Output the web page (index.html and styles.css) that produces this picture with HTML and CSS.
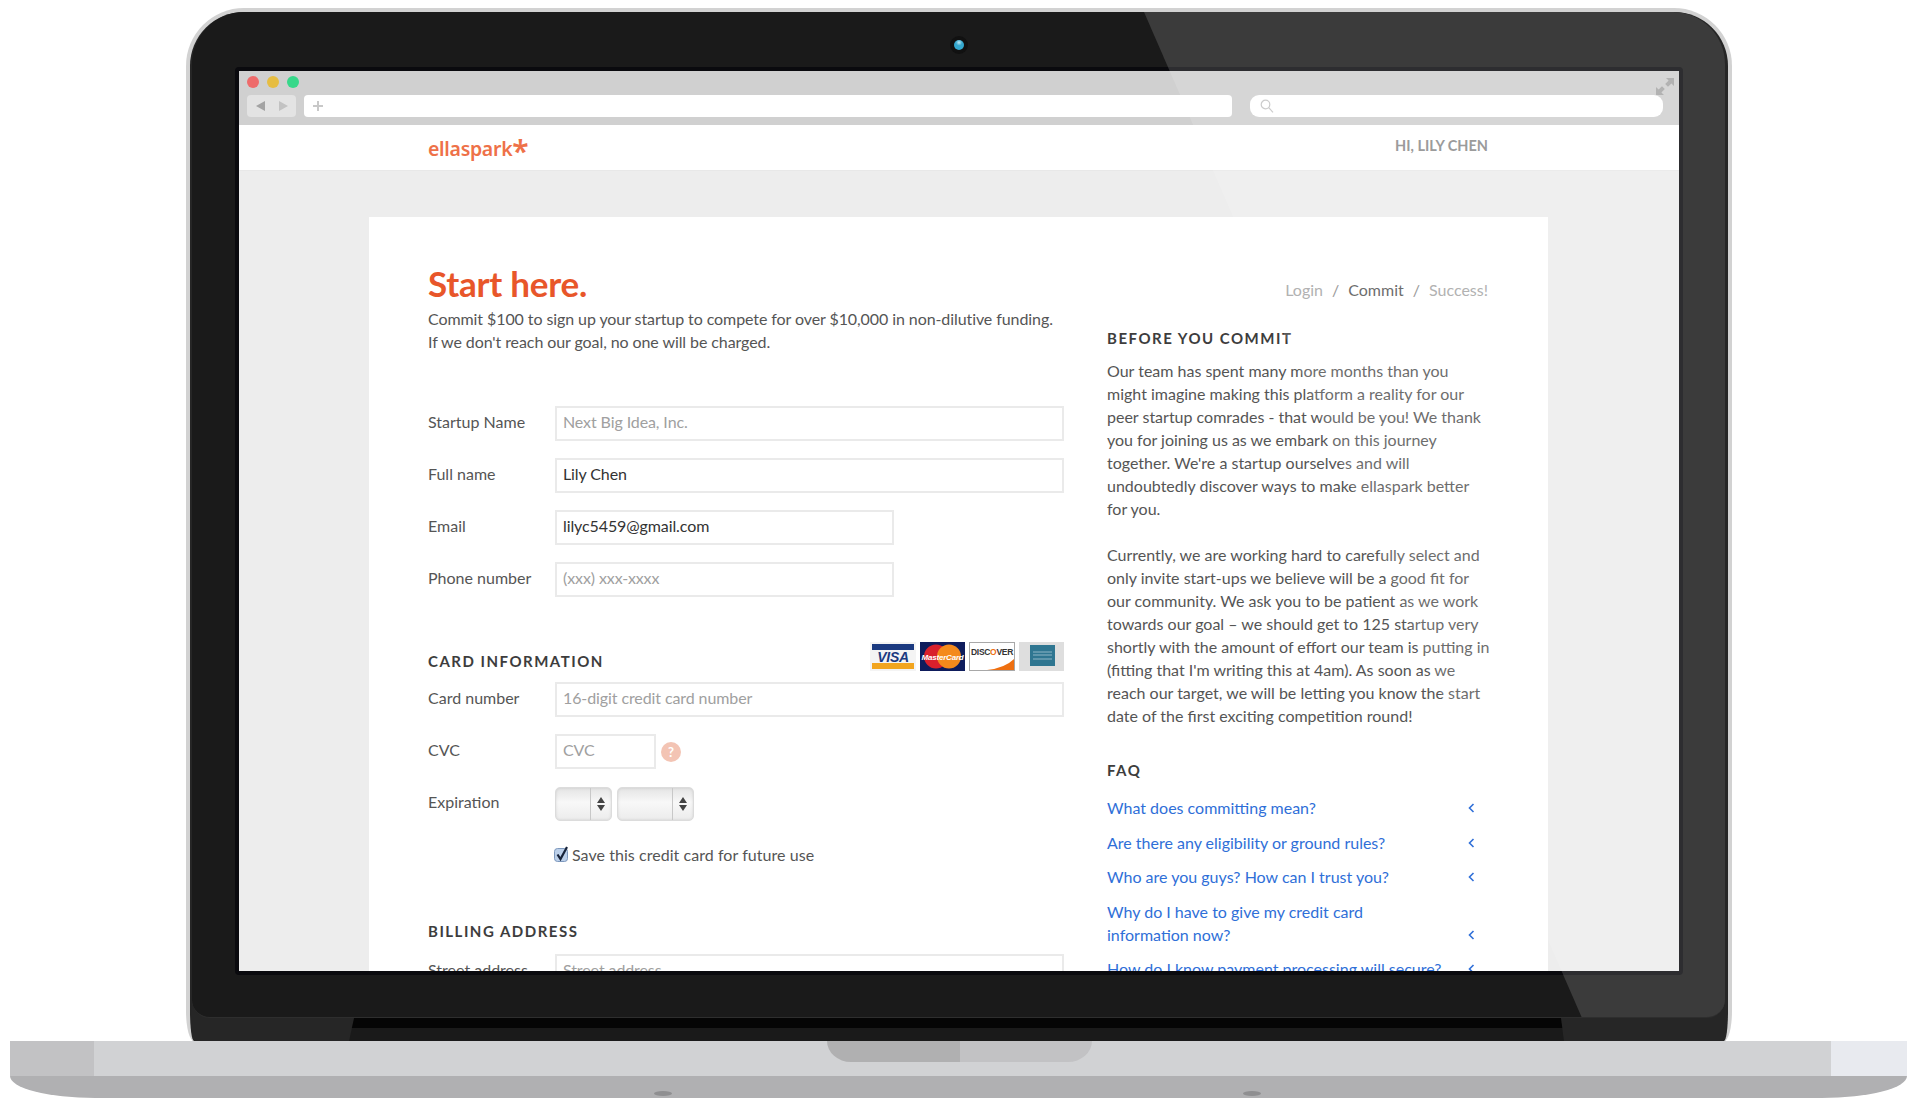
FILE: index.html
```html
<!DOCTYPE html>
<html lang="en">
<head>
    <meta charset="UTF-8">
    <title>ellaspark - Start here</title>
    <link rel="stylesheet" href="styles.css">
</head>
<body>
    <div class="laptop">
        <div class="bezel">
            <div class="camera"><span class="lens"></span></div>
            <div class="screen">
                <div class="browser">
                    <div class="dots">
                        <span class="dot dot-red"></span>
                        <span class="dot dot-yellow"></span>
                        <span class="dot dot-green"></span>
                    </div>
                    <div class="toolbar">
                        <div class="nav-btns">
                            <svg width="9" height="10" viewBox="0 0 9 10"><path d="M9 0v10L0 5z" fill="#a3a3a3"/></svg>
                            <svg width="9" height="10" viewBox="0 0 9 10"><path d="M0 0v10l9-5z" fill="#c2c2c2"/></svg>
                        </div>
                        <div class="url-bar">
                            <svg width="10" height="10" viewBox="0 0 10 10"><path d="M5 0v10M0 5h10" stroke="#c8c8c8" stroke-width="2"/></svg>
                        </div>
                        <div class="search-bar">
                            <svg width="14" height="14" viewBox="0 0 14 14" fill="none" stroke="#c4c4c4" stroke-width="1.2"><circle cx="5.5" cy="5.5" r="4.3"/><path d="M8.7 8.7l4.3 4.6"/></svg>
                        </div>
                    </div>
                    <svg class="expand" width="18" height="17" viewBox="0 0 18 17"><path d="M10 0h8v8l-2.6-2.6-3.4 3.4-2.8-2.8 3.4-3.4zM0 17V9l2.6 2.6 3.4-3.4 2.8 2.8-3.4 3.4L8 17z" fill="#a5a5a5"/></svg>
                </div>
                <div class="site-header">
                    <span class="logo">ellaspark<span class="logo-star">*</span></span>
                    <span class="user">HI, LILY CHEN</span>
                </div>
                <div class="page">
                    <div class="card">
                        <div class="col-left">
                            <h1>Start here.</h1>
                            <p class="intro">Commit $100 to sign up your startup to compete for over $10,000 in non-dilutive funding.<br>If we don't reach our goal, no one will be charged.</p>
                            <form class="form">
                                <div class="row"><label>Startup Name</label><input class="input" type="text" placeholder="Next Big Idea, Inc."></div>
                                <div class="row"><label>Full name</label><input class="input" type="text" value="Lily Chen"></div>
                                <div class="row"><label>Email</label><input class="input input-mid" type="text" value="lilyc5459@gmail.com"></div>
                                <div class="row"><label>Phone number</label><input class="input input-mid" type="text" placeholder="(xxx) xxx-xxxx"></div>

                                <div class="card-head">
                                    <h2>CARD INFORMATION</h2>
                                    <div class="card-icons">
                                        <svg width="46" height="29" viewBox="0 0 46 29">
                                            <rect width="46" height="29" fill="#f4f4f4"/>
                                            <rect x="2" y="2" width="42" height="6" fill="#1b3a80"/>
                                            <rect x="2" y="21" width="42" height="6" fill="#f2a51f"/>
                                            <text x="23" y="19.5" class="visa-text">VISA</text>
                                        </svg>
                                        <svg width="45" height="29" viewBox="0 0 45 29">
                                            <rect width="45" height="29" fill="#0e1c5c"/>
                                            <circle cx="16" cy="14.5" r="12" fill="#d9202c"/>
                                            <circle cx="29" cy="14.5" r="12" fill="#f48a1c"/>
                                            <text x="22.5" y="17.5" class="mc-text">MasterCard</text>
                                        </svg>
                                        <svg width="46" height="29" viewBox="0 0 46 29">
                                            <rect x=".5" y=".5" width="45" height="28" fill="#fff" stroke="#a8a8a8"/>
                                            <path d="M45 17v11H18q18-2 27-11z" fill="#ee6f10"/>
                                            <text x="23" y="13" class="disc-text">DISC<tspan fill="#ee6f10">O</tspan>VER</text>
                                        </svg>
                                        <svg width="45" height="29" viewBox="0 0 45 29">
                                            <rect width="45" height="29" fill="#dedede"/>
                                            <rect x="11" y="3" width="25" height="21" fill="#2f7691"/>
                                            <path d="M14 10h19M14 13h19M14 17h19" stroke="#8fb6c6"/>
                                        </svg>
                                    </div>
                                </div>
                                <div class="row"><label>Card number</label><input class="input" type="text" placeholder="16-digit credit card number"></div>
                                <div class="row"><label>CVC</label><input class="input input-cvc" type="text" placeholder="CVC"><span class="help">?</span></div>
                                <div class="row">
                                    <label>Expiration</label>
                                    <div class="select select-month"><span class="arrows"><svg width="8" height="14" viewBox="0 0 8 14"><path d="M4 0l4 6H0zM4 14l4-6H0z" fill="#444"/></svg></span></div>
                                    <div class="select select-year"><span class="arrows"><svg width="8" height="14" viewBox="0 0 8 14"><path d="M4 0l4 6H0zM4 14l4-6H0z" fill="#444"/></svg></span></div>
                                </div>
                                <div class="row">
                                    <label></label>
                                    <span class="check">
                                        <svg width="16" height="18" viewBox="0 0 16 18"><rect x=".5" y="3.5" width="13" height="13" rx="3" fill="#bcd0ea" stroke="#7d98bd"/><path d="M3.5 9.5l3 4.5L13 2" fill="none" stroke="#17233a" stroke-width="2.2"/></svg>
                                        Save this credit card for future use
                                    </span>
                                </div>

                                <h2 class="billing">BILLING ADDRESS</h2>
                                <div class="row"><label>Street address</label><input class="input" type="text" placeholder="Street address"></div>
                            </form>
                        </div>
                        <div class="col-right">
                            <div class="crumbs">
                                <span class="crumb">Login</span><span class="slash">/</span><span class="crumb-on">Commit</span><span class="slash">/</span><span class="crumb">Success!</span>
                            </div>
                            <h2 class="side-title">BEFORE YOU COMMIT</h2>
                            <p class="side-text">Our team has spent many more months than you<br>might imagine making this platform a reality for our<br>peer startup comrades - that would be you! We thank<br>you for joining us as we embark on this journey<br>together. We're a startup ourselves and will<br>undoubtedly discover ways to make ellaspark better<br>for you.</p>
                            <p class="side-text">Currently, we are working hard to carefully select and<br>only invite start-ups we believe will be a good fit for<br>our community. We ask you to be patient as we work<br>towards our goal – we should get to 125 startup very<br>shortly with the amount of effort our team is putting in<br>(fitting that I'm writing this at 4am). As soon as we<br>reach our target, we will be letting you know the start<br>date of the first exciting competition round!</p>
                            <h2 class="faq-title">FAQ</h2>
                            <ul class="faq">
                                <li><a>What does committing mean?</a><svg class="chev" width="7" height="10" viewBox="0 0 7 10"><path d="M5.5 1L1.5 5l4 4" fill="none" stroke="#2f6fd8" stroke-width="1.6"/></svg></li>
                                <li><a>Are there any eligibility or ground rules?</a><svg class="chev" width="7" height="10" viewBox="0 0 7 10"><path d="M5.5 1L1.5 5l4 4" fill="none" stroke="#2f6fd8" stroke-width="1.6"/></svg></li>
                                <li><a>Who are you guys? How can I trust you?</a><svg class="chev" width="7" height="10" viewBox="0 0 7 10"><path d="M5.5 1L1.5 5l4 4" fill="none" stroke="#2f6fd8" stroke-width="1.6"/></svg></li>
                                <li><a>Why do I have to give my credit card<br>information now?</a><svg class="chev" width="7" height="10" viewBox="0 0 7 10"><path d="M5.5 1L1.5 5l4 4" fill="none" stroke="#2f6fd8" stroke-width="1.6"/></svg></li>
                                <li><a>How do I know payment processing will secure?</a><svg class="chev" width="7" height="10" viewBox="0 0 7 10"><path d="M5.5 1L1.5 5l4 4" fill="none" stroke="#2f6fd8" stroke-width="1.6"/></svg></li>
                            </ul>
                        </div>
                    </div>
                </div>
            </div>
            <div class="glare"></div>
        </div>
        <div class="hinge"></div>
    </div>
    <div class="base">
        <div class="base-top">
            <span class="base-end-l"></span>
            <span class="base-mid"></span>
            <span class="base-end-r"></span>
            <div class="notch"><span class="notch-l"></span><span class="notch-r"></span></div>
        </div>
        <div class="base-bottom">
            <span class="foot"></span>
            <span class="foot"></span>
        </div>
    </div>
</body>
</html>
```

FILE: styles.css
```css
* {
    box-sizing: border-box;
}
body {
    margin: 0;
    background: #fff;
    font-family: Lato, "Liberation Sans", sans-serif;
    font-size: 16px;
    color: #555;
    overflow: hidden;
}

/* laptop shell */
.laptop {
    width: 1546px;
    height: 1033px;
    margin: 8px 0 0 186px;
    padding: 0 3px 0 2px;
    background: #262626;
    border: solid #d2d2d2;
    border-width: 4px 4px 0;
    border-radius: 58px 58px 8px 8px / 58px 58px 30px 30px;
}
.bezel {
    position: relative;
    height: 1006px;
    padding: 24px 42px 0 43px;
    background: #1a1a1a;
    border-radius: 52px 52px 18px 18px;
    border-bottom: 1px solid #2e2e2e;
    overflow: hidden;
}
.camera {
    width: 18px;
    height: 18px;
    margin: 0 auto 13px;
    padding: 4px;
    background: #111;
    border-radius: 50%;
}
.lens {
    display: block;
    width: 10px;
    height: 10px;
    background: radial-gradient(circle at 50% 25%, #bfe6f2 0, #34a8cf 35%);
    border-radius: 50%;
}
.screen {
    height: 908px;
    border: 4px solid #0a0a0e;
    border-radius: 4px;
    background: #ededed;
    overflow: hidden;
}
.glare {
    position: absolute;
    inset: 0;
    background: rgba(255, 255, 255, .145);
    clip-path: polygon(952px 0, 1533px 0, 1533px 1006px, 1390px 1006px);
    pointer-events: none;
}
.hinge {
    width: 1215px;
    height: 23px;
    margin-left: 157px;
    background: linear-gradient(#050505 10px, #1a1a1a 10px);
    clip-path: polygon(5px 0, 1212px 0, 1215px 100%, 0 100%);
}

/* base */
.base {
    width: 1897px;
    margin-left: 10px;
}
.base-top {
    position: relative;
    display: grid;
    grid-template-columns: 84px 1fr 76px;
    height: 35px;
}
.base-end-l {
    background: #c2c2c4;
}
.base-mid {
    background: #d1d2d4;
}
.base-end-r {
    background: #e8eaef;
}
.notch {
    position: absolute;
    left: 817px;
    top: 0;
    display: flex;
    width: 265px;
    height: 21px;
    border-radius: 0 0 24px 24px / 0 0 21px 21px;
    overflow: hidden;
}
.notch-l {
    width: 133px;
    background: #b0b0b1;
}
.notch-r {
    flex: 1;
    background: #c2c2c4;
}
.base-bottom {
    display: flex;
    justify-content: center;
    align-items: flex-end;
    gap: 571px;
    height: 22px;
    padding: 0 3px 2px 0;
    background: #b0b0b2;
    border-radius: 0 0 85px 85px / 0 0 22px 22px;
}
.foot {
    width: 18px;
    height: 5px;
    background: #8f8f91;
    border-radius: 50%;
}

/* browser chrome */
.browser {
    position: relative;
    height: 54px;
    background: #d0d0d0;
}
.dots {
    display: flex;
    gap: 8px;
    height: 24px;
    padding: 5px 0 0 8px;
}
.dot {
    width: 12px;
    height: 12px;
    border-radius: 50%;
}
.dot-red {
    background: #ee6b6b;
}
.dot-yellow {
    background: #e6bd42;
}
.dot-green {
    background: #37d88a;
}
.toolbar {
    display: flex;
    height: 22px;
    padding: 0 16px 0 8px;
}
.nav-btns {
    display: flex;
    align-items: center;
    justify-content: space-between;
    width: 49px;
    padding: 0 8px 0 9px;
    background: #e3e3e3;
    border-radius: 4px;
}
.url-bar {
    display: flex;
    align-items: center;
    width: 928px;
    margin: 0 18px 0 8px;
    padding-left: 9px;
    background: #fff;
    border-radius: 4px;
}
.search-bar {
    display: flex;
    align-items: center;
    flex: 1;
    padding-left: 10px;
    background: #fff;
    border-radius: 9px;
}
.expand {
    position: absolute;
    top: 7px;
    right: 5px;
}

/* site */
.site-header {
    display: flex;
    justify-content: space-between;
    align-items: center;
    height: 46px;
    padding: 0 191px 0 189px;
    background: #fff;
    border-bottom: 1px solid #e8e8e8;
}
.logo {
    margin-top: 2px;
    font-family: "Noto Sans", sans-serif;
    font-size: 19.5px;
    font-weight: 600;
    color: #ee7148;
    letter-spacing: -.3px;
}
.logo-star {
    display: inline-block;
    font-size: 30px;
    line-height: 20px;
    vertical-align: -6px;
}
.user {
    margin-bottom: 5px;
    font-size: 14.5px;
    font-weight: 700;
    color: #8a8a8a;
}
.page {
    padding: 46px 131px 0 130px;
}
.card {
    display: flex;
    justify-content: space-between;
    padding: 45px 60px 0 59px;
    background: #fff;
}
.col-left {
    width: 636px;
}
.col-right {
    width: 381px;
    padding-top: 16px;
}
h1 {
    margin: 0 0 2px;
    font-size: 35px;
    line-height: 43px;
    font-weight: 700;
    letter-spacing: -.25px;
    color: #e8562a;
}
h2 {
    margin: 0;
    font-size: 15px;
    line-height: 20px;
    font-weight: 700;
    letter-spacing: 1.5px;
    color: #3d3d3d;
}
.intro {
    margin: 0 0 53px;
    line-height: 23px;
    letter-spacing: -.085px;
}
.row {
    display: flex;
    align-items: center;
    height: 35px;
    margin-bottom: 17px;
}
.row label {
    flex: none;
    width: 127px;
    padding-bottom: 4px;
}
.input {
    width: 509px;
    height: 35px;
    padding: 0 6px 4px;
    border: 2px solid #eaeaea;
    font: inherit;
    letter-spacing: -.1px;
    color: #333;
    outline: none;
}
.input::placeholder {
    color: #a0a0a0;
    opacity: 1;
}
.input-mid {
    width: 339px;
}
.input-cvc {
    width: 101px;
}
.help {
    width: 20px;
    height: 20px;
    margin-left: 5px;
    background: #f3c4b4;
    border-radius: 50%;
    font-size: 13px;
    font-weight: 700;
    line-height: 20px;
    text-align: center;
    color: #fff;
}
.select {
    display: flex;
    justify-content: flex-end;
    height: 34px;
    background: linear-gradient(#e4e4e4, #f8f8f8 45%, #ececec);
    border: 1px solid #dcdcdc;
    border-radius: 5px;
    box-shadow: inset 0 0 3px rgba(0, 0, 0, .12);
}
.select-month {
    width: 57px;
    margin-right: 5px;
}
.select-year {
    width: 77px;
}
.arrows {
    display: flex;
    align-items: center;
    justify-content: center;
    width: 21px;
    border-left: 1px solid #c8c8c8;
}
.check {
    display: flex;
    align-items: center;
    gap: 2px;
    margin-left: -1px;
    padding-bottom: 3px;
    letter-spacing: .05px;
}
.card-head {
    display: flex;
    justify-content: space-between;
    align-items: flex-end;
    height: 29px;
    margin: 45px 0 11px;
}
.card-icons {
    display: flex;
    gap: 4px;
}
.visa-text {
    font: italic 800 14px "Liberation Sans", sans-serif;
    letter-spacing: -.3px;
    fill: #1b3a80;
    text-anchor: middle;
}
.mc-text {
    font: italic 700 8px "Liberation Sans", sans-serif;
    letter-spacing: -.2px;
    fill: #fff;
    text-anchor: middle;
}
.disc-text {
    font: 700 8.5px "Liberation Sans", sans-serif;
    letter-spacing: -.3px;
    fill: #333;
    text-anchor: middle;
}
.billing {
    margin: 48px 0 13px;
}
.crumbs {
    display: flex;
    justify-content: flex-end;
    line-height: 23px;
}
.crumb {
    color: #a5a5a5;
}
.crumb-on {
    color: #555;
}
.slash {
    margin: 0 9px;
    color: #888;
}
.side-title {
    margin: 27px 0 11px;
}
.side-text {
    margin: 0 0 23px;
    line-height: 23px;
    white-space: nowrap;
}
.faq-title {
    margin: 33px 0 16px;
}
.faq {
    margin: 0;
    padding: 0;
    list-style: none;
}
.faq li {
    display: flex;
    justify-content: space-between;
    align-items: flex-end;
    margin-bottom: 11.6px;
    padding-right: 13px;
    line-height: 23px;
}
.faq a {
    color: #2f6fd8;
}
.chev {
    margin-bottom: 6px;
}
```
